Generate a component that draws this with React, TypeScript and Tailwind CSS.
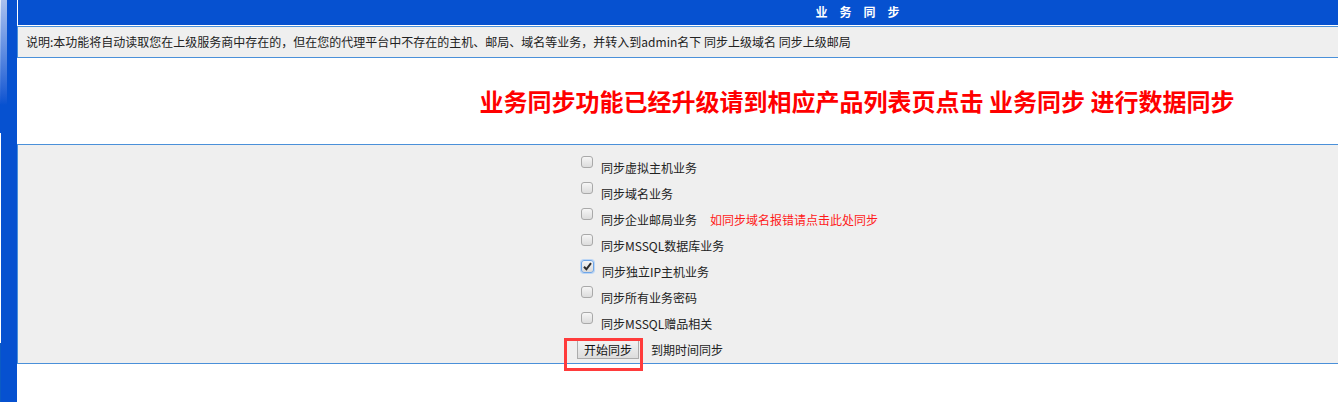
import React from "react";

const items = [
  { label: "同步虚拟主机业务" },
  { label: "同步域名业务" },
  { label: "同步企业邮局业务", extra: "如同步域名报错请点击此处同步" },
  { label: "同步MSSQL数据库业务" },
  { label: "同步独立IP主机业务", checked: true },
  { label: "同步所有业务密码" },
  { label: "同步MSSQL赠品相关" },
];

function Box({ checked }: { checked?: boolean }) {
  if (checked) {
    return (
      <span className="mt-[1px] flex h-[13px] w-[13px] shrink-0 items-center justify-center self-start rounded-[3px] border border-[#6fa6e8] bg-gradient-to-b from-[#f4f4f4] to-[#d9d9d9] shadow-[0_0_0_1px_#bcd6f5]">
        <svg width="9" height="9" viewBox="0 0 9 9">
          <path d="M1 4.8 L3.4 7.3 L8 1.2" fill="none" stroke="#2b2b2b" strokeWidth="2" />
        </svg>
      </span>
    );
  }
  return (
    <span className="mt-[1px] h-[12px] w-[12px] shrink-0 self-start rounded-[3px] border border-[#a9a9a9] bg-gradient-to-b from-[#f6f6f6] to-[#dcdcdc]" />
  );
}

export default function App() {
  return (
    <div className="flex h-[402px] w-[1338px] overflow-hidden bg-white font-['Noto_Sans_CJK_SC',sans-serif] text-[12px] text-[#222]">
      {/* left frame strip */}
      <div className="flex w-[17px] shrink-0">
        <div className="flex w-[1px] flex-col">
          <div className="h-[105px] bg-gradient-to-b from-[#e6eefb] to-[#0651d0]" />
          <div className="h-[28px] bg-[#0651d0]" />
          <div className="h-[210px] bg-white" />
          <div className="flex-1 bg-[#0a5bc4]" />
        </div>
        <div className="flex w-[6px] flex-col">
          <div className="h-[105px] bg-gradient-to-b from-[#a9c0ee] to-[#0651d0]" />
          <div className="flex-1 bg-[#0651d0]" />
        </div>
        <div className="flex-1 bg-[#0651d0]" />
      </div>

      {/* main table */}
      <div className="flex w-[1680px] shrink-0 flex-col">
        <div className="flex h-[26px] items-center justify-center border-b border-l border-white bg-[#0651d0] pb-[1px] pl-[12px] text-[12px] font-bold leading-none tracking-[12px] text-white">
          业务同步
        </div>

        <div className="flex h-[32px] items-center border-y border-l border-[#4a90d9] bg-[#efefef] pl-[8px] leading-none">
          说明:本功能将自动读取您在上级服务商中存在的，但在您的代理平台中不存在的主机、邮局、域名等业务，并转入到admin名下 同步上级域名 同步上级邮局
        </div>

        <div className="flex h-[86px] items-center justify-center text-[24px] font-bold leading-none text-[#ff0000]">
          业务同步功能已经升级请到相应产品列表页点击 业务同步 进行数据同步
        </div>

        <div className="flex h-[220px] flex-col border-y border-l border-[#4a90d9] bg-[#efefef] pl-[563px] pt-[10px]">
          {items.map((it) => (
            <div key={it.label} className="flex h-[26px] items-center leading-none">
              <Box checked={it.checked} />
              <span className="ml-[8px]">{it.label}</span>
              {it.extra && <span className="ml-[13px] text-[#ff1a1a]">{it.extra}</span>}
            </div>
          ))}
          <div className="ml-[-4px] flex h-[25px] items-start pt-[3px] leading-none">
            <span className="relative">
              <button className="flex h-[19px] w-[62px] items-center justify-center border border-[#acacac] bg-gradient-to-b from-[#f3f3f3] to-[#dddddd] text-[12px] leading-none text-[#111]">
                开始同步
              </button>
              <span className="pointer-events-none absolute left-[-13px] top-[-2px] h-[33px] w-[79px] border-[3px] border-[#ff3b3b]" />
            </span>
            <span className="ml-[12px] mt-[4px]">到期时间同步</span>
          </div>
        </div>
      </div>
    </div>
  );
}
